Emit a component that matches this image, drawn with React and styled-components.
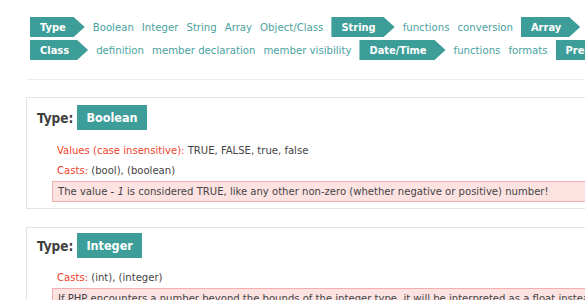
import React from "react";
import styled, {createGlobalStyle} from "styled-components";

const GlobalStyle = createGlobalStyle`
  html, body {
    margin: 0;
    padding: 0;
    background: #fff;
    overflow: hidden;
  }
  body {
    font-family: "DejaVu Sans", Tahoma, Verdana, sans-serif;
    font-stretch: condensed;
    color: #444;
  }
`;

const Page = styled.div`
  width: 680px;
  height: 300px;
  padding-top: 17px;
  box-sizing: border-box;
`;

const Nav = styled.nav`
  display: flex;
  flex-direction: column;
  gap: 3px;
  margin-left: 27px;
  padding-left: 3px;
  padding-bottom: 19px;
  border-bottom: 1px solid #ececec;
`;

const NavRow = styled.div`
  display: flex;
  align-items: center;
  gap: 8px;
  height: 20px;
  white-space: nowrap;
  overflow: hidden;
`;

const Tag = styled.span`
  flex: none;
  display: inline-flex;
  align-items: center;
  height: 20px;
  padding: 0 19px 0 10px;
  background: #3d9d98;
  color: #fff;
  font-size: 11px;
  font-weight: bold;
  clip-path: polygon(0 0, calc(100% - 11px) 0, 100% 50%, calc(100% - 11px) 100%, 0 100%);
`;

const NavLink = styled.a`
  flex: none;
  color: #4aa2a0;
  font-size: 11.3px;
  text-decoration: none;
`;

const Cards = styled.main`
  display: flex;
  flex-direction: column;
  gap: 18px;
  padding: 17px 0 0 26px;
`;

const Card = styled.section`
  border: 1px solid #e4e4e4;
  border-right: none;
  padding: ${(p) => (p.$tight ? "5px" : "7px")} 0 6px 10px;
`;

const Heading = styled.h2`
  display: flex;
  align-items: center;
  gap: 4px;
  margin: 0 0 ${(p) => (p.$tight ? "10px" : "11px")};
  font-size: 13.5px;
  font-weight: bold;
  color: #3f3f3f;
`;

const Badge = styled.span`
  display: inline-flex;
  align-items: center;
  height: 25px;
  padding: 0 9px;
  background: #3d9d98;
  color: #fff;
  font-size: 12.5px;
  font-weight: bold;
`;

const Body = styled.div`
  padding-left: 20px;
  font-size: 11.2px;
`;

const Line = styled.p`
  margin: 0;
  height: 20px;
  line-height: 20px;
  white-space: nowrap;
  overflow: hidden;
`;

const Label = styled.span`
  color: #f0442c;
`;

const Note = styled.p`
  margin: 0 0 0 -5px;
  padding: 0 5px;
  height: 19px;
  line-height: 19px;
  background: #fde2e2;
  border: 1px solid #f5adad;
  border-right: none;
  white-space: nowrap;
  overflow: hidden;
`;

const navRows = [
  [
    {tag: "Type"},
    "Boolean", "Integer", "String", "Array", "Object/Class",
    {tag: "String"},
    "functions", "conversion",
    {tag: "Array"},
    "functions",
  ],
  [
    {tag: "Class"},
    "definition", "member declaration", "member visibility",
    {tag: "Date/Time"},
    "functions", "formats",
    {tag: "Preg"},
  ],
];

function App() {
  return (
    <Page>
      <GlobalStyle/>
      <Nav>
        {navRows.map((row, i) => (
          <NavRow key={i}>
            {row.map((item, j) =>
              typeof item === "string"
                ? <NavLink key={j} href="#">{item}</NavLink>
                : <Tag key={j}>{item.tag}</Tag>
            )}
          </NavRow>
        ))}
      </Nav>
      <Cards>
        <Card>
          <Heading>Type: <Badge>Boolean</Badge></Heading>
          <Body>
            <Line><Label>Values (case insensitive):</Label> TRUE, FALSE, true, false</Line>
            <Line><Label>Casts:</Label> (bool), (boolean)</Line>
            <Note>The value <i>- 1</i> is considered TRUE, like any other non-zero (whether negative or positive) number!</Note>
          </Body>
        </Card>
        <Card $tight>
          <Heading $tight>Type: <Badge>Integer</Badge></Heading>
          <Body>
            <Line><Label>Casts:</Label> (int), (integer)</Line>
            <Note>If PHP encounters a number beyond the bounds of the integer type, it will be interpreted as a float instead.</Note>
          </Body>
        </Card>
      </Cards>
    </Page>
  );
}

export default App;
